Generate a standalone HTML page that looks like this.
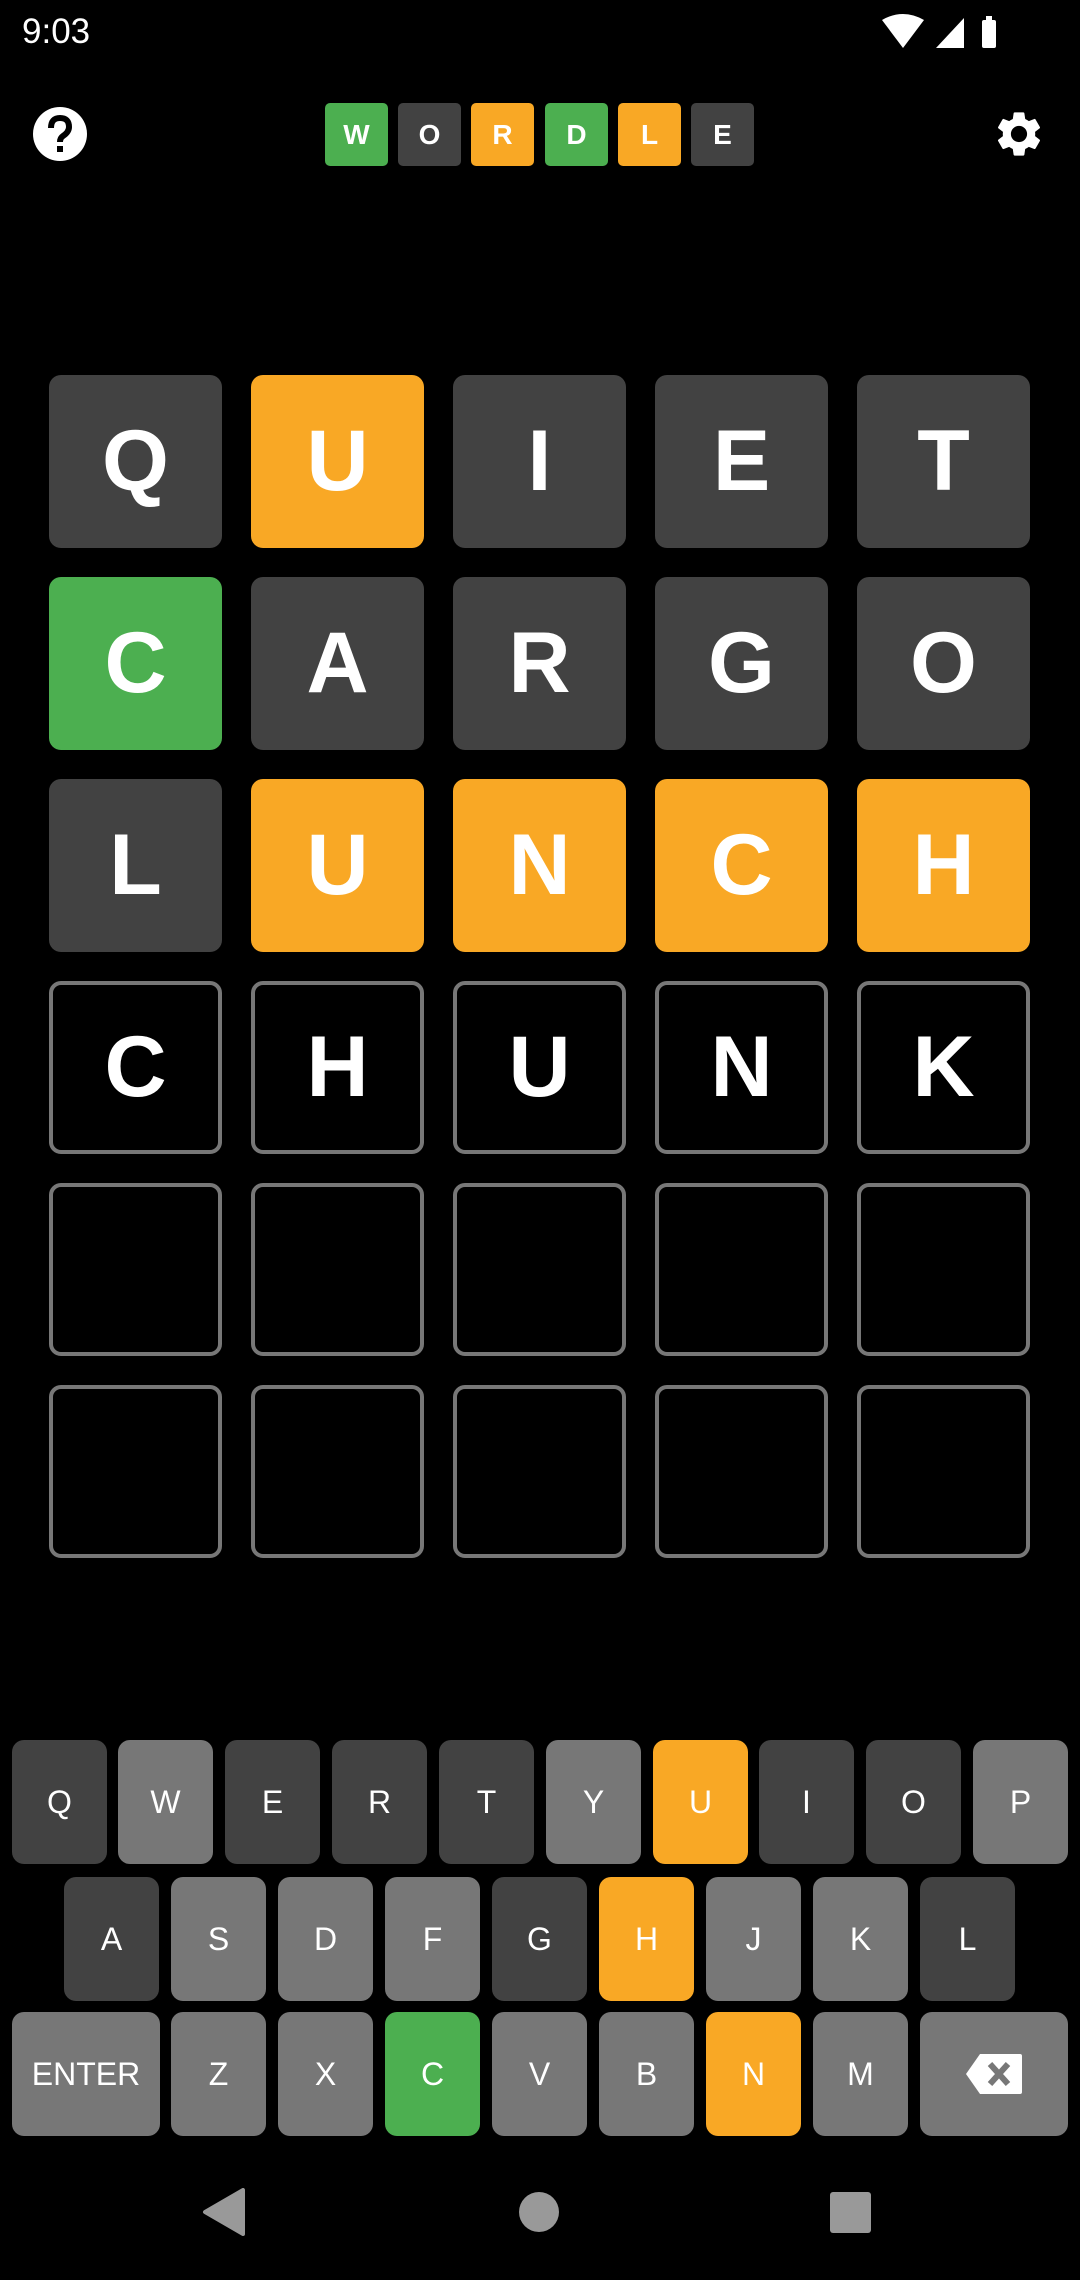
<!DOCTYPE html>
<html><head><meta charset="utf-8"><style>
*{margin:0;padding:0;box-sizing:border-box}
body{width:1080px;height:2280px;background:#000;position:relative;overflow:hidden;font-family:"Liberation Sans",sans-serif;color:#fff}
.a{position:absolute}
.t{position:absolute;width:173px;height:173px;border-radius:12px;display:flex;align-items:center;justify-content:center;font-weight:bold;font-size:86px}
.e{border:4px solid #777}
.dk{background:#424242}.or{background:#F9A825}.gr{background:#4CAF50}.lg{background:#777}
.k{position:absolute;width:95px;height:124px;border-radius:12px;display:flex;align-items:center;justify-content:center;font-size:32px}
.h{position:absolute;top:103px;width:63px;height:63px;border-radius:5px;display:flex;align-items:center;justify-content:center;font-weight:bold;font-size:28px}
</style></head><body>
<div class="a" style="left:22px;top:12px;font-size:35px">9:03</div>
<svg class="a" style="left:880px;top:14px" width="130" height="40" viewBox="0 0 130 40">
<path d="M2 6 Q23 -6 44 6 L23 34 Z" fill="#fff"/>
<path d="M84 4 L84 34 L56 34 Z" fill="#fff"/>
<rect x="102" y="6" width="14" height="28" rx="2" fill="#fff"/><rect x="106" y="2" width="6" height="5" fill="#fff"/>
</svg>
<svg class="a" style="left:32px;top:106px" width="56" height="56" viewBox="0 0 56 56">
<circle cx="28" cy="28" r="27" fill="#fff"/>
<path d="M19 22 Q19 12 28 12 Q37 12 37 21 Q37 26 31 30 Q28 32 28 36" stroke="#000" stroke-width="6" fill="none"/>
<rect x="25" y="40" width="6" height="6" fill="#000"/>
</svg>
<svg class="a" style="left:992px;top:107px" width="54" height="54" viewBox="0 0 24 24">
<path fill="#fff" d="M19.14 12.94c.04-.3.06-.61.06-.94 0-.32-.02-.64-.07-.94l2.03-1.58a.49.49 0 0 0 .12-.61l-1.92-3.32a.49.49 0 0 0-.59-.22l-2.39.96c-.5-.38-1.03-.7-1.62-.94l-.36-2.54a.48.48 0 0 0-.48-.41h-3.84c-.24 0-.43.17-.47.41l-.36 2.54c-.59.24-1.13.57-1.62.94l-2.39-.96c-.22-.08-.47 0-.59.22L2.74 8.87c-.12.21-.08.47.12.61l2.03 1.58c-.05.3-.09.63-.09.94s.02.64.07.94l-2.03 1.58a.49.49 0 0 0-.12.61l1.92 3.32c.12.22.37.29.59.22l2.39-.96c.5.38 1.03.7 1.62.94l.36 2.54c.05.24.24.41.48.41h3.84c.24 0 .44-.17.47-.41l.36-2.54c.59-.24 1.13-.56 1.62-.94l2.39.96c.22.08.47 0 .59-.22l1.92-3.32c.12-.22.07-.47-.12-.61l-2.01-1.58zM12 15.6c-1.98 0-3.6-1.62-3.6-3.6s1.62-3.6 3.6-3.6 3.6 1.62 3.6 3.6-1.62 3.6-3.6 3.6z"/>
</svg>
<div class="h gr" style="left:325px">W</div>
<div class="h dk" style="left:398px">O</div>
<div class="h or" style="left:471px">R</div>
<div class="h gr" style="left:545px">D</div>
<div class="h or" style="left:618px">L</div>
<div class="h dk" style="left:691px">E</div>

<div class="t dk" style="left:49px;top:375px">Q</div>
<div class="t or" style="left:251px;top:375px">U</div>
<div class="t dk" style="left:453px;top:375px">I</div>
<div class="t dk" style="left:655px;top:375px">E</div>
<div class="t dk" style="left:857px;top:375px">T</div>
<div class="t gr" style="left:49px;top:577px">C</div>
<div class="t dk" style="left:251px;top:577px">A</div>
<div class="t dk" style="left:453px;top:577px">R</div>
<div class="t dk" style="left:655px;top:577px">G</div>
<div class="t dk" style="left:857px;top:577px">O</div>
<div class="t dk" style="left:49px;top:779px">L</div>
<div class="t or" style="left:251px;top:779px">U</div>
<div class="t or" style="left:453px;top:779px">N</div>
<div class="t or" style="left:655px;top:779px">C</div>
<div class="t or" style="left:857px;top:779px">H</div>
<div class="t e" style="left:49px;top:981px">C</div>
<div class="t e" style="left:251px;top:981px">H</div>
<div class="t e" style="left:453px;top:981px">U</div>
<div class="t e" style="left:655px;top:981px">N</div>
<div class="t e" style="left:857px;top:981px">K</div>
<div class="t e" style="left:49px;top:1183px"></div>
<div class="t e" style="left:251px;top:1183px"></div>
<div class="t e" style="left:453px;top:1183px"></div>
<div class="t e" style="left:655px;top:1183px"></div>
<div class="t e" style="left:857px;top:1183px"></div>
<div class="t e" style="left:49px;top:1385px"></div>
<div class="t e" style="left:251px;top:1385px"></div>
<div class="t e" style="left:453px;top:1385px"></div>
<div class="t e" style="left:655px;top:1385px"></div>
<div class="t e" style="left:857px;top:1385px"></div>

<div class="k dk" style="left:12px;top:1740px">Q</div>
<div class="k lg" style="left:118px;top:1740px">W</div>
<div class="k dk" style="left:225px;top:1740px">E</div>
<div class="k dk" style="left:332px;top:1740px">R</div>
<div class="k dk" style="left:439px;top:1740px">T</div>
<div class="k lg" style="left:546px;top:1740px">Y</div>
<div class="k or" style="left:653px;top:1740px">U</div>
<div class="k dk" style="left:759px;top:1740px">I</div>
<div class="k dk" style="left:866px;top:1740px">O</div>
<div class="k lg" style="left:973px;top:1740px">P</div>

<div class="k dk" style="left:64px;top:1877px">A</div>
<div class="k lg" style="left:171px;top:1877px">S</div>
<div class="k lg" style="left:278px;top:1877px">D</div>
<div class="k lg" style="left:385px;top:1877px">F</div>
<div class="k dk" style="left:492px;top:1877px">G</div>
<div class="k or" style="left:599px;top:1877px">H</div>
<div class="k lg" style="left:706px;top:1877px">J</div>
<div class="k lg" style="left:813px;top:1877px">K</div>
<div class="k dk" style="left:920px;top:1877px">L</div>

<div class="k lg" style="left:12px;top:2012px;width:148px">ENTER</div>
<div class="k lg" style="left:171px;top:2012px">Z</div>
<div class="k lg" style="left:278px;top:2012px">X</div>
<div class="k gr" style="left:385px;top:2012px">C</div>
<div class="k lg" style="left:492px;top:2012px">V</div>
<div class="k lg" style="left:599px;top:2012px">B</div>
<div class="k or" style="left:706px;top:2012px">N</div>
<div class="k lg" style="left:813px;top:2012px">M</div>
<div class="k lg" style="left:920px;top:2012px;width:148px"><svg width="56" height="40" viewBox="0 0 56 40"><path d="M14 0 H54 Q56 0 56 2 V38 Q56 40 54 40 H14 L0 20 Z" fill="#fff"/><path d="M24 10 L42 30 M42 10 L24 30" stroke="#777" stroke-width="6"/></svg></div>

<svg class="a" style="left:200px;top:2188px" width="50" height="48"><path d="M43 2 V46 L5 24 Z" fill="#999" stroke="#999" stroke-width="4" stroke-linejoin="round"/></svg>
<div class="a" style="left:519px;top:2192px;width:40px;height:40px;border-radius:50%;background:#999"></div>
<div class="a" style="left:830px;top:2192px;width:41px;height:41px;border-radius:3px;background:#999"></div>
</body></html>
